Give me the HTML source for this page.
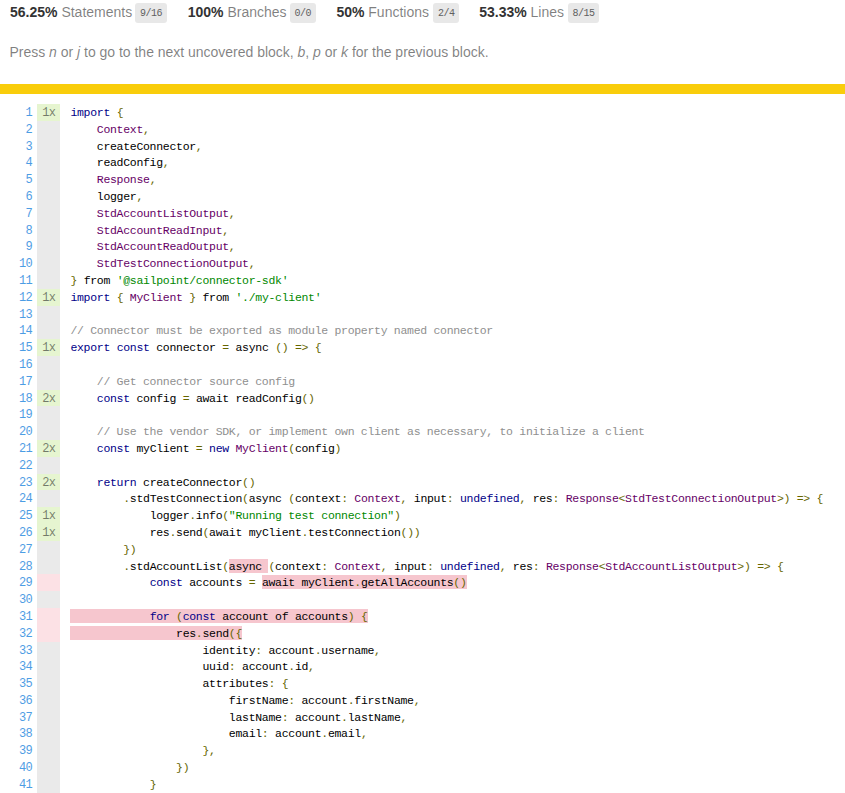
<!doctype html>
<html>
<head>
<meta charset="utf-8">
<title>Code coverage report for index.ts</title>
<style>
html, body { margin: 0; padding: 0; }
body { font-family: "Liberation Sans", sans-serif; font-size: 14px; color: #333; width: 845px; height: 793px; overflow: hidden; position: relative; background: #fff; }
*, *:after, *:before { box-sizing: border-box; }
.top { position: absolute; left: 10px; top: -6px; width: 825px; }
.stat { position: absolute; top: 0; padding: 10px 0 10px 0; white-space: nowrap; }
.strong { font-weight: bold; }
.quiet { color: rgba(0,0,0,0.5); }
.fraction { font-family: "Liberation Mono", monospace; font-size: 10px; letter-spacing: -0.5px; color: #606060; background: #E8E8E8; padding: 5px 4.75px 4px 4.5px; border-radius: 3px; vertical-align: middle; position: relative; left: -0.5px; }
p.press { position: absolute; left: 9.5px; top: 44px; margin: 0; line-height: 16px; letter-spacing: -0.015px; }
.status-line { position: absolute; left: 0; top: 84px; width: 845px; height: 10px; background: #f9cd0b; }
.cov { position: absolute; left: -1px; top: 104px; }
pre { font: 11.5px/16.8px "Liberation Mono", monospace; letter-spacing: -0.3px; margin: 0; padding: 0; tab-size: 2; }
table.coverage { border-collapse: collapse; margin: 0; padding: 0; }
table.coverage td { margin: 0; padding: 0; vertical-align: top; }
td.line-count { text-align: right; padding: 0 5px 0 20px !important; width: 38.2px; }
td.line-count a { color: #0074D9; opacity: 0.7; text-decoration: none; }
td.line-count, td.line-coverage { font-size: 12px; letter-spacing: -0.6px; }
td.line-coverage { text-align: right; padding-right: 10px !important; width: 33.2px; }
span.cline-any { display: inline-block; padding: 1px 5px 0 5px; width: 100%; height: 16.8px; vertical-align: top; }
.cline-yes { background: rgb(230,245,208); }
.cline-no { background: #FCE1E5; }
span.cline-neutral { background: #eaeaea; }
.cstat-no, .fstat-no { background: #F6C6CE; padding-top: 1px; }
td.text pre, td.line-count a { position: relative; top: 1px; }
.pln{color:#000}.str{color:#080}.kwd{color:#008}.com{color:#8f8f8f}.typ{color:#606}.lit{color:#066}.pun{color:#660}
</style>
</head>
<body>
<div class="top">
  <div class="stat" style="left:0"><span class="strong">56.25% </span> <span class="quiet">Statements</span> <span class="fraction" style="padding-left:5px;padding-right:5.25px;left:-1px">9/16</span></div>
  <div class="stat" style="left:177.7px"><span class="strong">100% </span> <span class="quiet">Branches</span> <span class="fraction">0/0</span></div>
  <div class="stat" style="left:326.4px"><span class="strong">50% </span> <span class="quiet">Functions</span> <span class="fraction" style="left:0.5px">2/4</span></div>
  <div class="stat" style="left:469.2px"><span class="strong">53.33% </span> <span class="quiet">Lines</span> <span class="fraction" style="left:0px">8/15</span></div>
</div>
<p class="quiet press">Press <em>n</em> or <em>j</em> to go to the next uncovered block, <em>b</em>, <em>p</em> or <em>k</em> for the previous block.</p>
<div class="status-line"></div>
<div class="cov">
<pre><table class="coverage">
<tr><td class="line-count quiet"><a>1</a>
<a>2</a>
<a>3</a>
<a>4</a>
<a>5</a>
<a>6</a>
<a>7</a>
<a>8</a>
<a>9</a>
<a>10</a>
<a>11</a>
<a>12</a>
<a>13</a>
<a>14</a>
<a>15</a>
<a>16</a>
<a>17</a>
<a>18</a>
<a>19</a>
<a>20</a>
<a>21</a>
<a>22</a>
<a>23</a>
<a>24</a>
<a>25</a>
<a>26</a>
<a>27</a>
<a>28</a>
<a>29</a>
<a>30</a>
<a>31</a>
<a>32</a>
<a>33</a>
<a>34</a>
<a>35</a>
<a>36</a>
<a>37</a>
<a>38</a>
<a>39</a>
<a>40</a>
<a>41</a></td><td class="line-coverage quiet"><span class="cline-any cline-yes">1x</span>
<span class="cline-any cline-neutral">&nbsp;</span>
<span class="cline-any cline-neutral">&nbsp;</span>
<span class="cline-any cline-neutral">&nbsp;</span>
<span class="cline-any cline-neutral">&nbsp;</span>
<span class="cline-any cline-neutral">&nbsp;</span>
<span class="cline-any cline-neutral">&nbsp;</span>
<span class="cline-any cline-neutral">&nbsp;</span>
<span class="cline-any cline-neutral">&nbsp;</span>
<span class="cline-any cline-neutral">&nbsp;</span>
<span class="cline-any cline-neutral">&nbsp;</span>
<span class="cline-any cline-yes">1x</span>
<span class="cline-any cline-neutral">&nbsp;</span>
<span class="cline-any cline-neutral">&nbsp;</span>
<span class="cline-any cline-yes">1x</span>
<span class="cline-any cline-neutral">&nbsp;</span>
<span class="cline-any cline-neutral">&nbsp;</span>
<span class="cline-any cline-yes">2x</span>
<span class="cline-any cline-neutral">&nbsp;</span>
<span class="cline-any cline-neutral">&nbsp;</span>
<span class="cline-any cline-yes">2x</span>
<span class="cline-any cline-neutral">&nbsp;</span>
<span class="cline-any cline-yes">2x</span>
<span class="cline-any cline-neutral">&nbsp;</span>
<span class="cline-any cline-yes">1x</span>
<span class="cline-any cline-yes">1x</span>
<span class="cline-any cline-neutral">&nbsp;</span>
<span class="cline-any cline-neutral">&nbsp;</span>
<span class="cline-any cline-no">&nbsp;</span>
<span class="cline-any cline-neutral">&nbsp;</span>
<span class="cline-any cline-no">&nbsp;</span>
<span class="cline-any cline-no">&nbsp;</span>
<span class="cline-any cline-neutral">&nbsp;</span>
<span class="cline-any cline-neutral">&nbsp;</span>
<span class="cline-any cline-neutral">&nbsp;</span>
<span class="cline-any cline-neutral">&nbsp;</span>
<span class="cline-any cline-neutral">&nbsp;</span>
<span class="cline-any cline-neutral">&nbsp;</span>
<span class="cline-any cline-neutral">&nbsp;</span>
<span class="cline-any cline-neutral">&nbsp;</span>
<span class="cline-any cline-neutral">&nbsp;</span></td><td class="text"><pre class="prettyprint"><span class="kwd">import</span> <span class="pun">{</span>
    <span class="typ">Context</span><span class="pun">,</span>
    <span class="pln">createConnector</span><span class="pun">,</span>
    <span class="pln">readConfig</span><span class="pun">,</span>
    <span class="typ">Response</span><span class="pun">,</span>
    <span class="pln">logger</span><span class="pun">,</span>
    <span class="typ">StdAccountListOutput</span><span class="pun">,</span>
    <span class="typ">StdAccountReadInput</span><span class="pun">,</span>
    <span class="typ">StdAccountReadOutput</span><span class="pun">,</span>
    <span class="typ">StdTestConnectionOutput</span><span class="pun">,</span>
<span class="pun">}</span> <span class="pln">from</span> <span class="str">'@sailpoint/connector-sdk'</span>
<span class="kwd">import</span> <span class="pun">{</span> <span class="typ">MyClient</span> <span class="pun">}</span> <span class="pln">from</span> <span class="str">'./my-client'</span>

<span class="com">// Connector must be exported as module property named connector</span>
<span class="kwd">export</span> <span class="kwd">const</span> <span class="pln">connector</span> <span class="pun">=</span> <span class="pln">async</span> <span class="pun">()</span> <span class="pun">=&gt;</span> <span class="pun">{</span>

    <span class="com">// Get connector source config</span>
    <span class="kwd">const</span> <span class="pln">config</span> <span class="pun">=</span> <span class="pln">await</span> <span class="pln">readConfig</span><span class="pun">()</span>

    <span class="com">// Use the vendor SDK, or implement own client as necessary, to initialize a client</span>
    <span class="kwd">const</span> <span class="pln">myClient</span> <span class="pun">=</span> <span class="kwd">new</span> <span class="typ">MyClient</span><span class="pun">(</span><span class="pln">config</span><span class="pun">)</span>

    <span class="kwd">return</span> <span class="pln">createConnector</span><span class="pun">()</span>
        <span class="pun">.</span><span class="pln">stdTestConnection</span><span class="pun">(</span><span class="pln">async</span> <span class="pun">(</span><span class="pln">context</span><span class="pun">:</span> <span class="typ">Context</span><span class="pun">,</span> <span class="pln">input</span><span class="pun">:</span> <span class="kwd">undefined</span><span class="pun">,</span> <span class="pln">res</span><span class="pun">:</span> <span class="typ">Response</span><span class="pun">&lt;</span><span class="typ">StdTestConnectionOutput</span><span class="pun">&gt;)</span> <span class="pun">=&gt;</span> <span class="pun">{</span>
            <span class="pln">logger</span><span class="pun">.</span><span class="pln">info</span><span class="pun">(</span><span class="str">"Running test connection"</span><span class="pun">)</span>
            <span class="pln">res</span><span class="pun">.</span><span class="pln">send</span><span class="pun">(</span><span class="pln">await</span> <span class="pln">myClient</span><span class="pun">.</span><span class="pln">testConnection</span><span class="pun">())</span>
        <span class="pun">})</span>
        <span class="pun">.</span><span class="pln">stdAccountList</span><span class="pun">(</span><span class="cstat-no"><span class="pln">async</span> </span><span class="pun">(</span><span class="pln">context</span><span class="pun">:</span> <span class="typ">Context</span><span class="pun">,</span> <span class="pln">input</span><span class="pun">:</span> <span class="kwd">undefined</span><span class="pun">,</span> <span class="pln">res</span><span class="pun">:</span> <span class="typ">Response</span><span class="pun">&lt;</span><span class="typ">StdAccountListOutput</span><span class="pun">&gt;)</span> <span class="pun">=&gt;</span> <span class="pun">{</span>
            <span class="kwd">const</span> <span class="pln">accounts</span> <span class="pun">=</span> <span class="cstat-no"><span class="pln">await</span> <span class="pln">myClient</span><span class="pun">.</span><span class="pln">getAllAccounts</span><span class="pun">()</span></span>

<span class="cstat-no">            <span class="kwd">for</span> <span class="pun">(</span><span class="kwd">const</span> <span class="pln">account</span> <span class="pln">of</span> <span class="pln">accounts</span><span class="pun">)</span> <span class="pun">{</span></span>
<span class="cstat-no">                <span class="pln">res</span><span class="pun">.</span><span class="pln">send</span><span class="pun">({</span></span>
                    <span class="pln">identity</span><span class="pun">:</span> <span class="pln">account</span><span class="pun">.</span><span class="pln">username</span><span class="pun">,</span>
                    <span class="pln">uuid</span><span class="pun">:</span> <span class="pln">account</span><span class="pun">.</span><span class="pln">id</span><span class="pun">,</span>
                    <span class="pln">attributes</span><span class="pun">:</span> <span class="pun">{</span>
                        <span class="pln">firstName</span><span class="pun">:</span> <span class="pln">account</span><span class="pun">.</span><span class="pln">firstName</span><span class="pun">,</span>
                        <span class="pln">lastName</span><span class="pun">:</span> <span class="pln">account</span><span class="pun">.</span><span class="pln">lastName</span><span class="pun">,</span>
                        <span class="pln">email</span><span class="pun">:</span> <span class="pln">account</span><span class="pun">.</span><span class="pln">email</span><span class="pun">,</span>
                    <span class="pun">},</span>
                <span class="pun">})</span>
            <span class="pun">}</span></pre></td></tr>
</table></pre>
</div>
</body>
</html>
